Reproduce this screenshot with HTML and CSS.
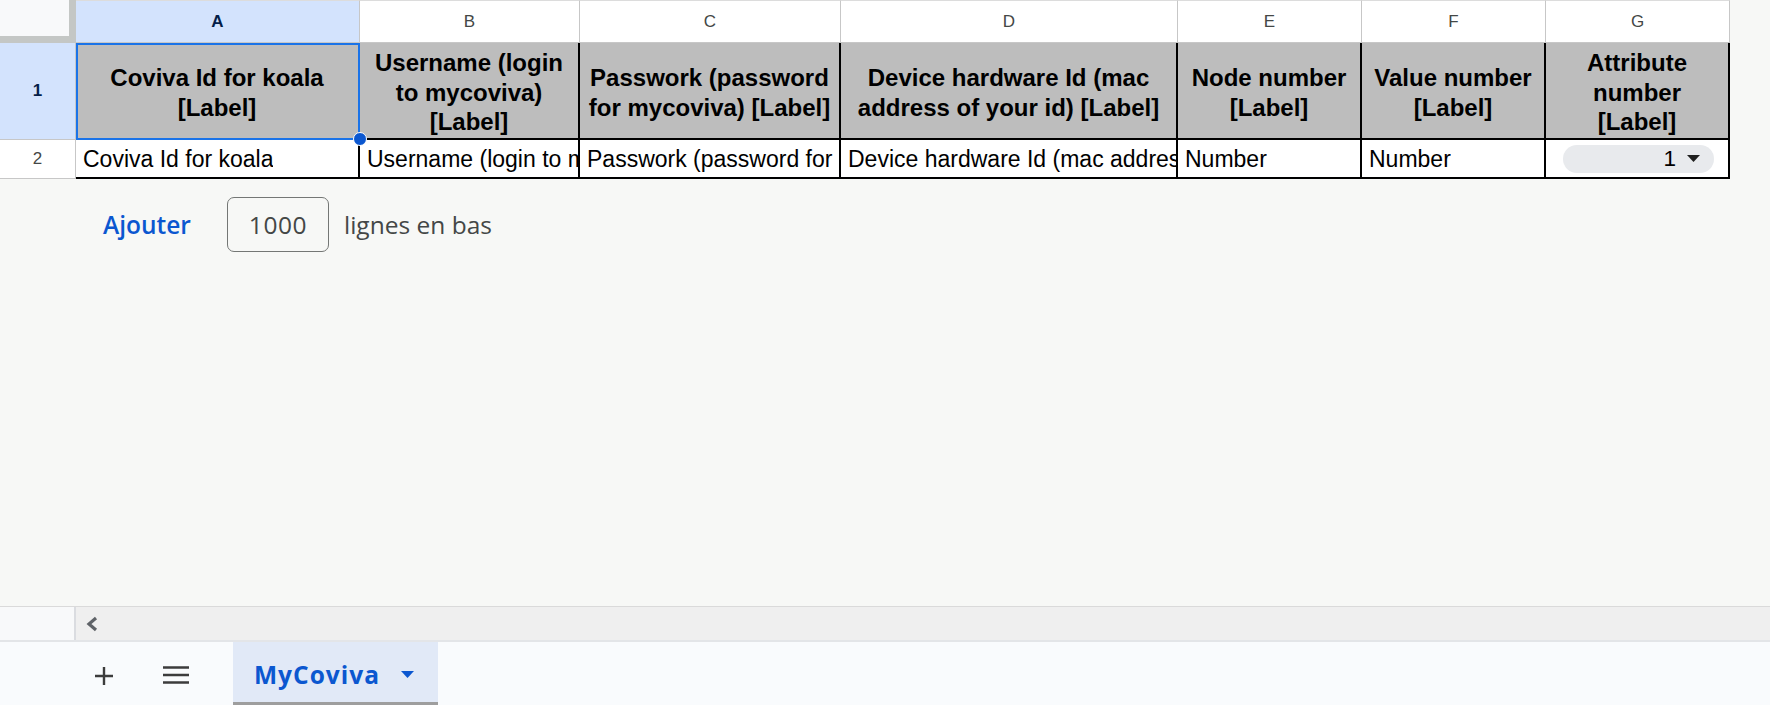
FILE: index.html
```html
<!DOCTYPE html>
<html lang="fr">
<head>
<meta charset="utf-8">
<title>MyCoviva</title>
<link rel="stylesheet" href="styles.css">
</head>
<body>
<div class="app">
  <div class="grid">
    <div class="corner"></div>
    <div class="colhead sel">A</div>
    <div class="colhead">B</div>
    <div class="colhead">C</div>
    <div class="colhead">D</div>
    <div class="colhead">E</div>
    <div class="colhead">F</div>
    <div class="colhead">G</div>

    <div class="rowhead sel">1</div>
    <div class="hcell active">Coviva Id for koala [Label]<span class="selbox"></span><span class="handle"></span></div>
    <div class="hcell">Username (login to mycoviva) [Label]</div>
    <div class="hcell">Passwork (password for mycoviva) [Label]</div>
    <div class="hcell">Device hardware Id (mac address of your id) [Label]</div>
    <div class="hcell">Node number [Label]</div>
    <div class="hcell">Value number [Label]</div>
    <div class="hcell">Attribute number [Label]</div>

    <div class="rowhead">2</div>
    <div class="dcell"><span class="clip">Coviva Id for koala</span></div>
    <div class="dcell"><span class="clip">Username (login to mycoviva)</span></div>
    <div class="dcell"><span class="clip">Passwork (password for mycoviva)</span></div>
    <div class="dcell"><span class="clip">Device hardware Id (mac address of your id)</span></div>
    <div class="dcell"><span class="clip">Number</span></div>
    <div class="dcell"><span class="clip">Number</span></div>
    <div class="dcell chipcell"><div class="chip"><span>1</span><svg class="chipcaret" width="13" height="7" viewBox="0 0 13 7"><path d="M0 0H13L6.5 7Z" fill="#1f1f1f"/></svg></div></div>
  </div>

  <div class="addrow">
    <span class="addbtn">Ajouter</span>
    <span class="addinput">1000</span>
    <span class="addlabel">lignes en bas</span>
  </div>

  <div class="filler"></div>

  <div class="hscroll">
    <div class="hs-left"></div>
    <div class="hs-track">
      <svg width="14" height="16" viewBox="0 0 14 16"><path d="M11 2L4 8L11 14" fill="none" stroke="#5f6368" stroke-width="3.2"/></svg>
    </div>
  </div>

  <div class="tabbar">
    <span class="tb-icon plus"><svg width="20" height="20" viewBox="0 0 20 20"><path d="M10 1V19M1 10H19" stroke="#3c3c3c" stroke-width="2.4"/></svg></span>
    <span class="tb-icon menu"><svg width="26" height="18" viewBox="0 0 26 18"><path d="M0 1.5H26M0 9H26M0 16.5H26" stroke="#3c3c3c" stroke-width="2.6"/></svg></span>
    <div class="tab">
      <span class="tabname">MyCoviva</span>
      <svg width="13" height="7" viewBox="0 0 13 7"><path d="M0 0H13L6.5 7Z" fill="#0b57d0"/></svg>
    </div>
  </div>
</div>
</body>
</html>
```

FILE: styles.css
```css
* { box-sizing: border-box; }
html, body { margin: 0; padding: 0; }
body {
  width: 1770px;
  height: 705px;
  overflow: hidden;
  background: #f7f8f6;
  font-family: "Liberation Sans", Arial, sans-serif;
}
.app {
  height: 705px;
  display: flex;
  flex-direction: column;
}
.grid {
  display: grid;
  grid-template-columns: 76px 284px 220px 261px 337px 184px 184px 184px;
  grid-template-rows: 43px 97px 39px;
  width: 1730px;
}
.corner {
  background: #f8f9fa;
  border-right: 7px solid #c4c7c5;
  border-bottom: 7px solid #c4c7c5;
}
.colhead {
  background: #fff;
  border-right: 1px solid #c7c7c7;
  border-bottom: 1px solid #c7c7c7;
  border-top: 1px solid #dcdcdc;
  display: flex;
  align-items: center;
  justify-content: center;
  font-size: 17px;
  color: #444746;
}
.colhead.sel {
  background: #d3e3fd;
  color: #041e49;
  font-weight: bold;
}
.rowhead {
  background: #fff;
  border-right: 1px solid #c7c7c7;
  border-bottom: 1px solid #c7c7c7;
  display: flex;
  align-items: center;
  justify-content: center;
  font-size: 17px;
  color: #444746;
}
.rowhead.sel {
  background: #d3e3fd;
  color: #041e49;
  font-weight: bold;
}
.hcell {
  position: relative;
  background: #bdbdbd;
  border-right: 2px solid #000;
  border-bottom: 2px solid #000;
  display: flex;
  align-items: center;
  justify-content: center;
  text-align: center;
  padding: 4px 6px 0;
  font-weight: bold;
  font-size: 24px;
  line-height: 29.5px;
  color: #000;
}
.selbox {
  position: absolute;
  left: 0;
  top: 0;
  right: -2px;
  bottom: -2px;
  border: 2px solid #1a73e8;
}
.handle {
  position: absolute;
  right: -9px;
  bottom: -8px;
  width: 14px;
  height: 14px;
  border-radius: 50%;
  background: #0b57d0;
  border: 1px solid #fff;
  z-index: 2;
}
.dcell {
  background: #fff;
  border-right: 2px solid #000;
  border-bottom: 2px solid #000;
  padding: 2px 0 0 7px;
  display: flex;
  align-items: center;
  white-space: nowrap;
  overflow: hidden;
  font-size: 23px;
  color: #000;
}
.clip {
  display: block;
  overflow: hidden;
  max-width: 100%;
}
.chipcell {
  padding: 0 14px 0 17px;
}
.chip {
  flex: 1;
  height: 28px;
  border-radius: 14px;
  background: #e8eaed;
  display: flex;
  align-items: center;
  justify-content: flex-end;
  gap: 11px;
  padding-right: 14px;
  font-size: 22.5px;
}
.addrow {
  display: flex;
  align-items: center;
  margin-top: 18px;
  padding-left: 103px;
  height: 55px;
  font-family: "Open Sans", Roboto, sans-serif;
  font-size: 24.5px;
}
.addbtn {
  color: #0b57d0;
  font-weight: 600;
  width: 85px;
  margin-right: 39px;
  white-space: nowrap;
}
.addinput {
  width: 102px;
  height: 55px;
  border: 1px solid #747775;
  border-radius: 7px;
  display: flex;
  align-items: center;
  justify-content: center;
  color: #444746;
  margin-right: 15px;
  letter-spacing: 0.6px;
}
.addlabel {
  color: #444746;
}
.filler { flex: 1; }
.hscroll {
  height: 36px;
  display: flex;
  border-top: 1px solid #dadada;
  border-bottom: 2px solid #e3e5e8;
}
.hs-left {
  width: 76px;
  background: #f8f9fa;
  border-right: 2px solid #dadce0;
}
.hs-track {
  flex: 1;
  background: #efefef;
  display: flex;
  align-items: center;
  padding-left: 9px;
}
.tabbar {
  height: 63px;
  background: #f9fbfd;
  display: flex;
  align-items: stretch;
}
.tb-icon {
  display: flex;
  align-items: center;
  padding-top: 5px;
}
.plus { margin-left: 94px; }
.menu { margin-left: 49px; padding-top: 2px; }
.tab {
  margin-left: 44px;
  width: 205px;
  background: #e1e9f7;
  border-bottom: 3px solid #9e9e9e;
  display: flex;
  align-items: center;
  padding-left: 21px;
  padding-top: 5px;
  gap: 21px;
  font-family: "Open Sans", Roboto, sans-serif;
  font-weight: 700;
  font-size: 24.5px;
  letter-spacing: 1px;
  color: #0b57d0;
}
```
